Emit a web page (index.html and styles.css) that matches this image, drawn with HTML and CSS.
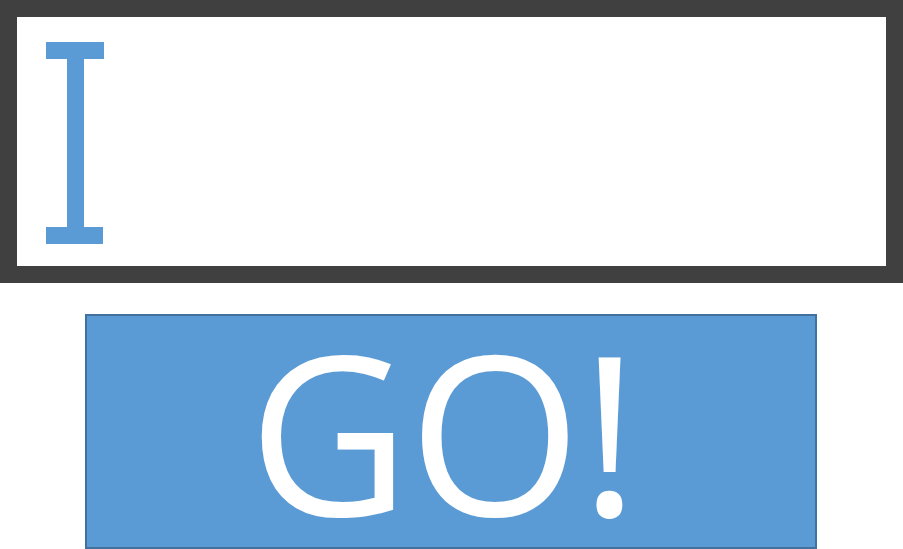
FILE: index.html
```html
<!DOCTYPE html>
<html>
<head>
<meta charset="utf-8">
<link rel="stylesheet" href="styles.css">
</head>
<body>
<div class="field">
  <svg class="caret" width="58" height="202" viewBox="0 0 58 202" aria-hidden="true">
    <rect x="0" y="0" width="58" height="17" fill="#5b9bd5"/>
    <rect x="21" y="0" width="17" height="202" fill="#5b9bd5"/>
    <rect x="-1" y="185" width="58" height="17" fill="#5b9bd5"/>
  </svg>
</div>
<div class="go"><span class="go-label">GO!</span></div>
</body>
</html>
```
FILE: styles.css
```css
html, body {
  margin: 0;
  padding: 0;
  background: #ffffff;
}
body {
  width: 903px;
  height: 549px;
  overflow: hidden;
}
.field {
  box-sizing: border-box;
  width: 903px;
  height: 283px;
  border: 17px solid #404040;
  background: #ffffff;
  padding: 25px 0 0 29px;
}
.caret {
  display: block;
}
.go {
  box-sizing: border-box;
  margin: 31px 0 0 85px;
  width: 732px;
  height: 235px;
  border: 2px solid #41719c;
  background: #5b9bd5;
  color: #ffffff;
  display: flex;
  align-items: center;
  justify-content: center;
  padding: 0 16px 4px 0;
  overflow: hidden;
}
.go-label {
  display: block;
  font-family: "Open Sans", "Liberation Sans", sans-serif;
  font-size: 222px;
  line-height: 190px;
  letter-spacing: -1px;
}
```
